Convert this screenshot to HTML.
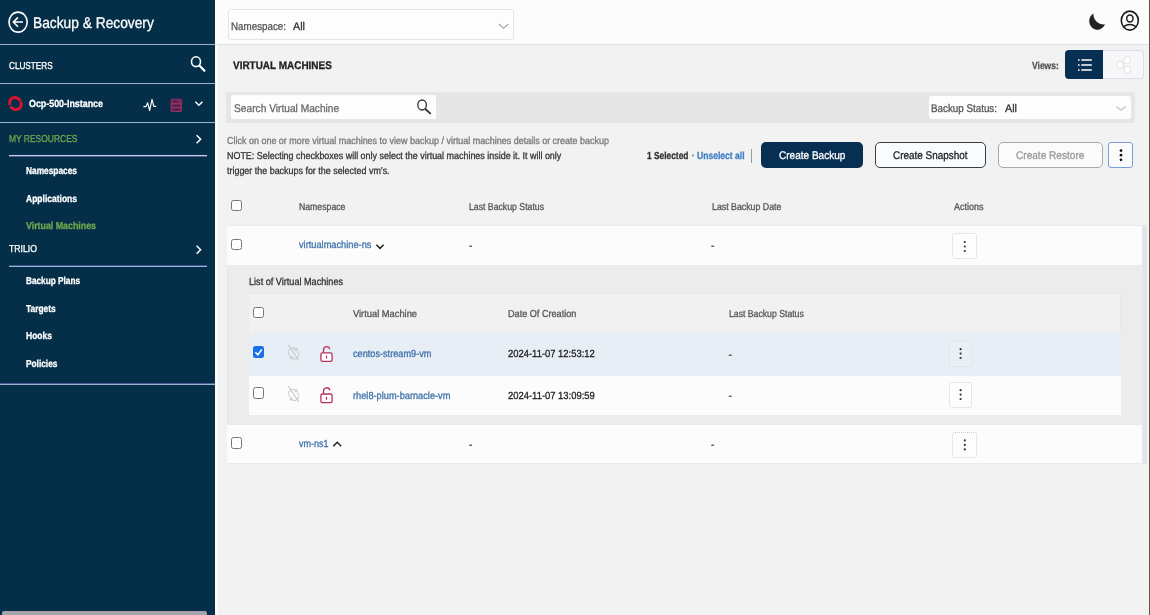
<!DOCTYPE html>
<html lang="en"><head><meta charset="utf-8"><title>Backup &amp; Recovery - Virtual Machines</title>
<style>
html,body{margin:0;padding:0}
body{width:1150px;height:615px;overflow:hidden;position:relative;background:#f2f2f2;font-family:"Liberation Sans", sans-serif;}
.t{position:absolute;white-space:nowrap;line-height:20px;height:20px;display:block;transform-origin:0 50%;text-rendering:geometricPrecision;-webkit-text-stroke:0.3px}
.b{position:absolute;box-sizing:border-box}
svg{position:absolute;overflow:visible}
</style></head><body>
<!-- ============ SIDEBAR ============ -->
<div class="b" style="left:0;top:0;width:215px;height:615px;background:#052f49"></div>
<div class="b" style="left:0;top:44px;width:215px;height:1px;background:#9bb2cd"></div>
<div class="b" style="left:0;top:83px;width:215px;height:1px;background:#9bb2cd"></div>
<div class="b" style="left:0;top:122px;width:215px;height:1px;background:#9bb2cd"></div>
<div class="b" style="left:8.6px;top:155px;width:198.5px;height:1px;background:#c9d0ec"></div>
<div class="b" style="left:8.6px;top:156px;width:198.5px;height:1px;background:#4c5a98"></div>
<div class="b" style="left:8.6px;top:265px;width:198.5px;height:1px;background:#3a5488"></div>
<div class="b" style="left:8.6px;top:266px;width:198.5px;height:1px;background:#9fb4d4"></div>
<div class="b" style="left:0;top:383px;width:215px;height:1px;background:#4d5f9a"></div>
<div class="b" style="left:0;top:384px;width:215px;height:1px;background:#9bb2cd"></div>
<div class="b" style="left:2px;top:611px;width:205px;height:5px;background:#a8a3aa;border-radius:2px 2px 0 0"></div>
<svg width="215" height="400" style="left:0;top:0" viewBox="0 0 215 400">
  <!-- back -->
  <ellipse cx="18.1" cy="22.1" rx="9.1" ry="10" fill="none" stroke="#fff" stroke-width="1.6"/>
  <path d="M23 22.1H13.4M18 17.4L13.3 22.1L18 26.8" fill="none" stroke="#fff" stroke-width="1.5"/>
  <!-- search -->
  <ellipse cx="196" cy="61.7" rx="4.5" ry="4.9" fill="none" stroke="#fff" stroke-width="1.6"/>
  <path d="M199.6 65.8L204.4 70.6" stroke="#fff" stroke-width="2.2" stroke-linecap="round"/>
  <!-- openshift -->
  <g transform="rotate(-28 15.4 103.5)"><ellipse cx="15.4" cy="103.5" rx="5.6" ry="6.2" fill="none" stroke="#e3122f" stroke-width="2.9" stroke-dasharray="17.2 1.4" stroke-dashoffset="-0.7"/></g>
  <!-- pulse -->
  <path d="M143.4 106.6H146L147.7 102.8L149.6 110.6L152 99.4L153.8 106.4H156.2" fill="none" stroke="#fff" stroke-width="1.15" stroke-linejoin="round"/>
  <!-- server -->
  <rect x="171.2" y="99.3" width="10.2" height="12.2" rx="1.2" fill="#6a2a58" stroke="#9c2e5e" stroke-width="1.1"/>
  <path d="M171.2 103.6H181.4M171.2 107.5H181.4" stroke="#9c2e5e" stroke-width="1.1"/>
  <path d="M173.2 101.4H177M173.2 105.6H179.6M173.2 109.6H179.6" stroke="#31234f" stroke-width="1.2"/>
  <!-- chevron down -->
  <path d="M195.4 101.8L198.9 105.3L202.4 101.8" fill="none" stroke="#fff" stroke-width="1.5"/>
  <!-- chevrons right -->
  <path d="M196.6 135.2L200.6 139.2L196.6 143.2" fill="none" stroke="#fff" stroke-width="1.5"/>
  <path d="M196.6 245.8L200.6 249.8L196.6 253.8" fill="none" stroke="#fff" stroke-width="1.5"/>
</svg>

<!-- ============ TOP BAR ============ -->
<div class="b" style="left:215px;top:0;width:935px;height:45px;background:#fcfcfc;border-bottom:1px solid #e3e3e6"></div>
<div class="b" style="left:215px;top:45px;width:3px;height:570px;background:#fbfbfc"></div>
<div class="b" style="left:227.6px;top:9px;width:286.4px;height:31px;background:#fdfdfd;border:1px solid #e3e3ec;border-radius:3px"></div>
<svg width="60" height="30" style="left:1085px;top:5px" viewBox="1085 5 60 30">
  <path d="M498.8 24L503.6 28.1L508.4 24" fill="none" stroke="#a8a8a8" stroke-width="1.2"/>
  <!-- moon -->
  <path d="M1093.4 13.4A8.2 8.7 0 1 0 1105 24.3A10.2 10.4 0 0 1 1093.4 13.4Z" fill="#222"/>
  <!-- user -->
  <ellipse cx="1129.8" cy="20.6" rx="8.5" ry="9.5" fill="none" stroke="#1d1d1d" stroke-width="1.6"/>
  <ellipse cx="1129.9" cy="18.5" rx="3.2" ry="3.5" fill="none" stroke="#1d1d1d" stroke-width="1.5"/>
  <path d="M1123.6 26.6Q1129.8 22.4 1136 26.6" fill="none" stroke="#1d1d1d" stroke-width="1.5"/>
</svg>
<div class="b" style="left:1149px;top:0;width:1px;height:615px;background:#5a5a50"></div>

<!-- ============ HEADER ROW ============ -->
<div class="b" style="left:1064.6px;top:50.4px;width:38.6px;height:28.6px;background:#062f52;border-radius:4px 0 0 4px"></div>
<div class="b" style="left:1103px;top:50.4px;width:40.6px;height:28.6px;background:#f7f7f9;border:1px solid #dedee8;border-left:0;border-radius:0 4px 4px 0"></div>
<svg width="80" height="30" style="left:1064px;top:50px" viewBox="1064 50 80 30">
  <path d="M1081.3 60H1091.8M1081.3 65H1091.8M1081.3 70H1091.8" stroke="#fff" stroke-width="1.5"/>
  <path d="M1078 60H1079.6M1078 65H1079.6M1078 70H1079.6" stroke="#fff" stroke-width="1.6"/>
  <path d="M1120 64.8L1127.3 60.3M1120 64.8L1127.3 69.8" stroke="#e0e0e4" stroke-width="1"/>
  <ellipse cx="1120" cy="64.8" rx="3.3" ry="3.6" fill="#fff" stroke="#e2e2e6" stroke-width="1"/>
  <ellipse cx="1127.3" cy="60.3" rx="3.3" ry="3.6" fill="#fff" stroke="#e2e2e6" stroke-width="1"/>
  <ellipse cx="1127.3" cy="69.8" rx="3.3" ry="3.6" fill="#fff" stroke="#e2e2e6" stroke-width="1"/>
</svg>

<!-- ============ FILTER BAND ============ -->
<div class="b" style="left:225.5px;top:92px;width:909.5px;height:31px;background:#e6e6e7"></div>
<div class="b" style="left:231px;top:95.4px;width:205px;height:23.8px;background:#fdfdfe;border-radius:2px"></div>
<div class="b" style="left:929px;top:96px;width:201.8px;height:23.2px;background:#fdfdfe;border-radius:3px"></div>
<svg width="30" height="30" style="left:410px;top:95px" viewBox="410 95 30 30">
  <ellipse cx="422.1" cy="105" rx="4.3" ry="5" fill="none" stroke="#333" stroke-width="1.3"/>
  <path d="M425.6 109.2L430.2 113.4" stroke="#333" stroke-width="1.9" stroke-linecap="round"/>
</svg>
<svg width="20" height="12" style="left:1112px;top:102px" viewBox="1112 102 20 12">
  <path d="M1116.4 106.6L1121 110.2L1125.6 106.6" fill="none" stroke="#c4c4c8" stroke-width="1.3"/>
</svg>

<!-- ============ ACTION BUTTONS ============ -->
<div class="b" style="left:751px;top:148.6px;width:1.4px;height:14px;background:#9a9a9a"></div>
<div class="b" style="left:760.6px;top:141.6px;width:102.6px;height:26.4px;background:#062f52;border-radius:5px"></div>
<div class="b" style="left:875px;top:141.6px;width:111px;height:26.4px;background:#f8fcfe;border:1px solid #3a3f46;border-radius:5px"></div>
<div class="b" style="left:997.6px;top:141.6px;width:105px;height:26.4px;background:#fbfbfb;border:1px solid #a9a9a9;border-radius:5px"></div>
<div class="b" style="left:1108.4px;top:142.2px;width:24.2px;height:26.2px;background:#fbfbfd;border:1px solid #7b9fd6;border-radius:3px"></div>
<svg width="10" height="20" style="left:1116px;top:146px" viewBox="1116 146 10 20">
  <circle cx="1121" cy="150.6" r="1.35" fill="#111"/><circle cx="1121" cy="155.2" r="1.35" fill="#111"/><circle cx="1121" cy="159.8" r="1.35" fill="#111"/>
</svg>

<!-- ============ TABLE ============ -->
<!-- outer row 1 -->
<div class="b" style="left:227.4px;top:225.4px;width:914.6px;height:40.6px;background:#fcfcfd;border-top:1px solid #ebebee;border-bottom:1px solid #ebebee"></div>
<!-- expanded -->
<div class="b" style="left:226.6px;top:266px;width:915.4px;height:158.4px;background:#ececed;border-left:1.5px solid #e4e4e8"></div>
<div class="b" style="left:249px;top:293px;width:872px;height:40px;background:#f1f1f2;border-top:1px solid #e6e6ea;border-right:1px solid #e6e6ea"></div>
<div class="b" style="left:249px;top:333px;width:872px;height:42.6px;background:#e7eef5"></div>
<div class="b" style="left:249px;top:375.6px;width:872px;height:39.6px;background:#fcfcfd"></div>
<!-- outer row 2 -->
<div class="b" style="left:227.4px;top:424.2px;width:914.6px;height:40.2px;background:#fcfcfd;border-top:1px solid #ebebee;border-bottom:1px solid #ebebee"></div>

<div class="b" style="left:1142.2px;top:225.4px;width:4.6px;height:239px;background:#e5e5e8"></div>
<!-- checkboxes -->
<div class="b" style="left:231.4px;top:199.6px;width:10.8px;height:11.4px;background:#fff;border:1px solid #767676;border-radius:2.5px"></div>
<div class="b" style="left:231.4px;top:239px;width:10.8px;height:11.4px;background:#fff;border:1px solid #767676;border-radius:2.5px"></div>
<div class="b" style="left:231.4px;top:437.2px;width:10.8px;height:11.4px;background:#fff;border:1px solid #767676;border-radius:2.5px"></div>
<div class="b" style="left:253px;top:307px;width:10.8px;height:11.4px;background:#fff;border:1px solid #767676;border-radius:2.5px"></div>
<div class="b" style="left:253px;top:346.4px;width:10.8px;height:11.4px;background:#1a6fe6;border-radius:2.5px"></div>
<div class="b" style="left:253px;top:387.4px;width:10.8px;height:11.4px;background:#fff;border:1px solid #767676;border-radius:2.5px"></div>

<!-- kebabs -->
<div class="b" style="left:952px;top:233px;width:25px;height:26.4px;background:#fdfdfe;border:1px dotted #cfcfd6;border-radius:3px"></div>
<div class="b" style="left:949px;top:341px;width:23.4px;height:26px;background:#ebf0f6;border:1px dotted #d6dbe4;border-radius:3px"></div>
<div class="b" style="left:949px;top:382.2px;width:23.4px;height:25.6px;background:#fdfdfe;border:1px dotted #cfcfd6;border-radius:3px"></div>
<div class="b" style="left:952px;top:431.5px;width:25px;height:26.4px;background:#fdfdfe;border:1px dotted #cfcfd6;border-radius:3px"></div>

<svg width="935" height="300" style="left:215px;top:200px" viewBox="215 200 935 300">
  <g fill="#333">
    <circle cx="964.8" cy="242" r="1.1"/><circle cx="964.8" cy="246.5" r="1.1"/><circle cx="964.8" cy="251" r="1.1"/>
    <circle cx="960.6" cy="349.2" r="1.1"/><circle cx="960.6" cy="353.6" r="1.1"/><circle cx="960.6" cy="358" r="1.1"/>
    <circle cx="960.6" cy="390.2" r="1.1"/><circle cx="960.6" cy="394.6" r="1.1"/><circle cx="960.6" cy="399" r="1.1"/>
    <circle cx="964.8" cy="440.4" r="1.1"/><circle cx="964.8" cy="444.9" r="1.1"/><circle cx="964.8" cy="449.4" r="1.1"/>
  </g>
  <!-- checkmark -->
  <path d="M255.4 352.2L257.8 354.8L261.8 349.4" fill="none" stroke="#fff" stroke-width="1.6"/>
  <!-- chevrons -->
  <path d="M376.4 244.8L380 248.4L383.6 244.8" fill="none" stroke="#222" stroke-width="1.5"/>
  <path d="M333.2 446.2L337.2 442.2L341.2 446.2" fill="none" stroke="#222" stroke-width="1.5"/>
  <!-- sync disabled x2 -->
  <g id="syncoff" fill="none" stroke="#c9c9c9" stroke-width="1.1">
    <path d="M289.6 355.4A4.3 4.6 0 0 1 296.4 349.6M297.6 351.4A4.3 4.6 0 0 1 291 357.4"/>
    <path d="M296.9 347.8V350.4H294.4M290.4 359.2V356.6H292.8"/>
    <path d="M288.3 344.9L298.6 360.2"/>
  </g>
  <use href="#syncoff" y="41.4"/>
  <!-- locks -->
  <g id="lock" fill="none" stroke="#b5305e" stroke-width="1.3">
    <rect x="320.9" y="352.8" width="11.2" height="8.6" rx="1.6" fill="#fff"/>
    <path d="M323.5 352.6V350A3.2 3.5 0 0 1 329.8 349.2"/>
    <path d="M326.5 355.6V358.6" stroke-width="1.2"/>
  </g>
  <use href="#lock" y="41.2"/>
</svg>

<div id="txt" style="position:absolute;left:0;top:0;width:1150px;height:615px;will-change:transform">
<span class="t" id="t0" style="left:33.2px;top:14px;font-size:15.5px;font-weight:400;color:#fff;transform:scaleX(0.8874)">Backup &amp; Recovery</span>
<span class="t" id="t1" style="left:8.8px;top:57px;font-size:10.1px;font-weight:400;color:#fff;transform:scaleX(0.8095)">CLUSTERS</span>
<span class="t" id="t2" style="left:29.0px;top:95px;font-size:10.3px;font-weight:700;color:#fff;transform:scaleX(0.8620)">Ocp-500-Instance</span>
<span class="t" id="t3" style="left:8.6px;top:130px;font-size:10.1px;font-weight:400;color:#6fa84f;transform:scaleX(0.8372)">MY RESOURCES</span>
<span class="t" id="t4" style="left:26.0px;top:162px;font-size:10.1px;font-weight:700;color:#fff;transform:scaleX(0.8261)">Namespaces</span>
<span class="t" id="t5" style="left:26.0px;top:190px;font-size:10.1px;font-weight:700;color:#fff;transform:scaleX(0.8419)">Applications</span>
<span class="t" id="t6" style="left:26.0px;top:217px;font-size:10.1px;font-weight:700;color:#6fa84f;transform:scaleX(0.8747)">Virtual Machines</span>
<span class="t" id="t7" style="left:9.0px;top:240px;font-size:10.1px;font-weight:400;color:#fff;transform:scaleX(0.8607)">TRILIO</span>
<span class="t" id="t8" style="left:26.0px;top:272px;font-size:10.1px;font-weight:700;color:#fff;transform:scaleX(0.8157)">Backup Plans</span>
<span class="t" id="t9" style="left:26.0px;top:300px;font-size:10.1px;font-weight:700;color:#fff;transform:scaleX(0.8287)">Targets</span>
<span class="t" id="t10" style="left:26.0px;top:327px;font-size:10.1px;font-weight:700;color:#fff;transform:scaleX(0.8425)">Hooks</span>
<span class="t" id="t11" style="left:26.0px;top:355px;font-size:10.1px;font-weight:700;color:#fff;transform:scaleX(0.8229)">Policies</span>
<span class="t" id="t12" style="left:231.0px;top:17px;font-size:11.1px;font-weight:400;color:#555;transform:scaleX(0.8831)">Namespace:</span>
<span class="t" id="t13" style="left:293.4px;top:17px;font-size:11.1px;font-weight:400;color:#333;transform:scaleX(0.9722)">All</span>
<span class="t" id="t14" style="left:232.8px;top:56px;font-size:11.1px;font-weight:700;color:#222;transform:scaleX(0.8972)">VIRTUAL MACHINES</span>
<span class="t" id="t15" style="left:1031.6px;top:57px;font-size:10.2px;font-weight:700;color:#555;transform:scaleX(0.8351)">Views:</span>
<span class="t" id="t16" style="left:233.8px;top:99px;font-size:11.1px;font-weight:400;color:#6a6a6a;transform:scaleX(0.9188)">Search Virtual Machine</span>
<span class="t" id="t17" style="left:931.0px;top:99px;font-size:11.1px;font-weight:400;color:#555;transform:scaleX(0.8844)">Backup Status:</span>
<span class="t" id="t18" style="left:1005.0px;top:99px;font-size:11.1px;font-weight:400;color:#333;transform:scaleX(0.9722)">All</span>
<span class="t" id="t19" style="left:227.4px;top:132px;font-size:10px;font-weight:400;color:#777;transform:scaleX(0.8972)">Click on one or more virtual machines to view backup / virtual machines details or create backup</span>
<span class="t" id="t20" style="left:227.4px;top:147px;font-size:10px;font-weight:400;color:#333;transform:scaleX(0.8937)">NOTE: Selecting checkboxes will only select the virtual machines inside it. It will only</span>
<span class="t" id="t21" style="left:227.4px;top:162px;font-size:10px;font-weight:400;color:#333;transform:scaleX(0.8927)">trigger the backups for the selected vm’s.</span>
<span class="t" id="t22" style="left:647.0px;top:147px;font-size:10.2px;font-weight:700;color:#333;transform:scaleX(0.8213)">1 Selected</span>
<span class="t" id="t23" style="left:691.5px;top:147px;font-size:10.2px;font-weight:700;color:#888;transform:scaleX(1.0000)">·</span>
<span class="t" id="t24" style="left:697.4px;top:147px;font-size:10.2px;font-weight:700;color:#3f7fc4;transform:scaleX(0.8406)">Unselect all</span>
<span class="t" id="t25" style="left:778.6px;top:146px;font-size:11.2px;font-weight:400;color:#fff;transform:scaleX(0.8971)">Create Backup</span>
<span class="t" id="t26" style="left:893.0px;top:146px;font-size:11.2px;font-weight:400;color:#222;transform:scaleX(0.8884)">Create Snapshot</span>
<span class="t" id="t27" style="left:1016.0px;top:146px;font-size:11.2px;font-weight:400;color:#999;transform:scaleX(0.9015)">Create Restore</span>
<span class="t" id="t28" style="left:298.6px;top:198px;font-size:10px;font-weight:400;color:#555;transform:scaleX(0.8696)">Namespace</span>
<span class="t" id="t29" style="left:469.0px;top:198px;font-size:10px;font-weight:400;color:#555;transform:scaleX(0.8704)">Last Backup Status</span>
<span class="t" id="t30" style="left:711.6px;top:198px;font-size:10px;font-weight:400;color:#555;transform:scaleX(0.8792)">Last Backup Date</span>
<span class="t" id="t31" style="left:954.0px;top:198px;font-size:10px;font-weight:400;color:#555;transform:scaleX(0.9025)">Actions</span>
<span class="t" id="t32" style="left:298.6px;top:236px;font-size:10.3px;font-weight:400;color:#3f72a8;transform:scaleX(0.8971)">virtualmachine-ns</span>
<span class="t" id="t33" style="left:469.0px;top:237px;font-size:10.3px;font-weight:400;color:#333;transform:scaleX(1.0000)">-</span>
<span class="t" id="t34" style="left:711.0px;top:237px;font-size:10.3px;font-weight:400;color:#333;transform:scaleX(1.0000)">-</span>
<span class="t" id="t35" style="left:249.0px;top:273px;font-size:10.3px;font-weight:400;color:#333;transform:scaleX(0.8846)">List of Virtual Machines</span>
<span class="t" id="t36" style="left:352.6px;top:305px;font-size:10px;font-weight:400;color:#555;transform:scaleX(0.9309)">Virtual Machine</span>
<span class="t" id="t37" style="left:507.6px;top:305px;font-size:10px;font-weight:400;color:#555;transform:scaleX(0.9114)">Date Of Creation</span>
<span class="t" id="t38" style="left:728.6px;top:305px;font-size:10px;font-weight:400;color:#555;transform:scaleX(0.8680)">Last Backup Status</span>
<span class="t" id="t39" style="left:352.6px;top:345px;font-size:10.3px;font-weight:400;color:#3f72a8;transform:scaleX(0.8896)">centos-stream9-vm</span>
<span class="t" id="t40" style="left:507.6px;top:345px;font-size:10.3px;font-weight:400;color:#222;transform:scaleX(0.9150)">2024-11-07 12:53:12</span>
<span class="t" id="t41" style="left:728.6px;top:346px;font-size:10.3px;font-weight:400;color:#333;transform:scaleX(1.0000)">-</span>
<span class="t" id="t42" style="left:352.6px;top:387px;font-size:10.3px;font-weight:400;color:#3f72a8;transform:scaleX(0.8958)">rhel8-plum-barnacle-vm</span>
<span class="t" id="t43" style="left:507.6px;top:387px;font-size:10.3px;font-weight:400;color:#222;transform:scaleX(0.9150)">2024-11-07 13:09:59</span>
<span class="t" id="t44" style="left:728.6px;top:387px;font-size:10.3px;font-weight:400;color:#333;transform:scaleX(1.0000)">-</span>
<span class="t" id="t45" style="left:298.6px;top:435px;font-size:10.3px;font-weight:400;color:#3f72a8;transform:scaleX(0.8707)">vm-ns1</span>
<span class="t" id="t46" style="left:469.0px;top:436px;font-size:10.3px;font-weight:400;color:#333;transform:scaleX(1.0000)">-</span>
<span class="t" id="t47" style="left:711.0px;top:436px;font-size:10.3px;font-weight:400;color:#333;transform:scaleX(1.0000)">-</span>
</div>
</body></html>
